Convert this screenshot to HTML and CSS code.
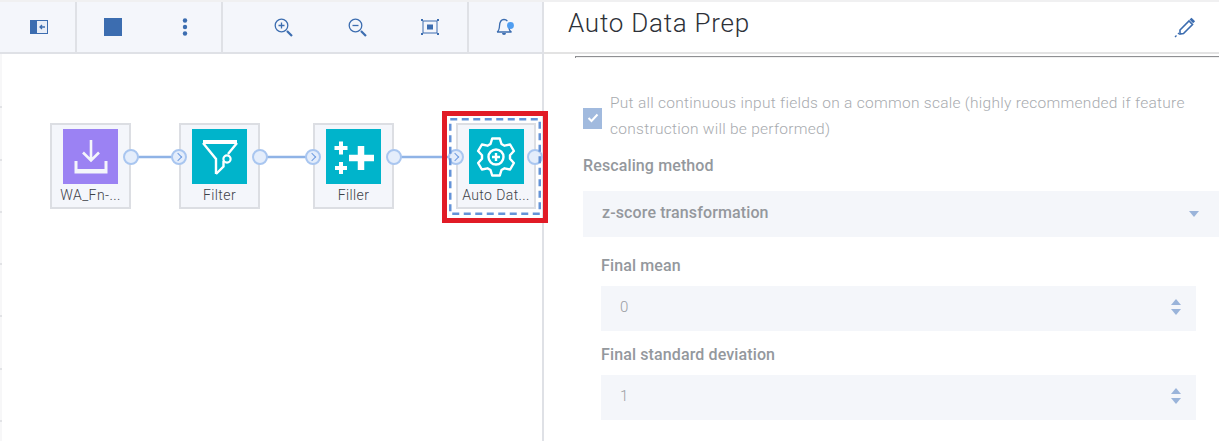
FILE: index.html
```html
<!DOCTYPE html>
<html lang="en">
<head>
<meta charset="utf-8">
<title>Auto Data Prep</title>
<link rel="stylesheet" href="styles.css">
</head>
<body>
<div class="app">
  <section class="flow">
    <div class="toolbar">
      <div class="tool-group g1">
        <svg class="ico" width="18" height="14" viewBox="0 0 18 14"><rect width="18" height="14" fill="#e9eef7"/><path d="M0 0h7v14H0zM0 0h18v1H0zM0 13h18v1H0zM17 0h1v14h-1z" fill="#3c6db0"/><path d="M15 7h-5M12 5 10 7l2 2" fill="none" stroke="#3c6db0" stroke-width="1.3"/></svg>
      </div>
      <div class="tool-group g2">
        <svg class="ico" width="18" height="18" viewBox="0 0 18 18"><rect width="18" height="18" fill="#3c6db0"/></svg>
        <svg class="ico" width="6" height="18" viewBox="0 0 6 18"><circle cx="3" cy="2.5" r="2.2" fill="#3c6db0"/><circle cx="3" cy="9" r="2.2" fill="#3c6db0"/><circle cx="3" cy="15.5" r="2.2" fill="#3c6db0"/></svg>
      </div>
      <div class="tool-group g3">
        <svg class="ico" width="19" height="19" viewBox="0 0 19 19"><circle cx="7.5" cy="7.5" r="6.3" fill="none" stroke="#3c6db0" stroke-width="1.3"/><path d="M7.5 4.5v6M4.5 7.5h6" stroke="#3c6db0" stroke-width="1.3"/><path d="m13 13 5 5" stroke="#3c6db0" stroke-width="2.2"/></svg>
        <svg class="ico" width="19" height="19" viewBox="0 0 19 19"><circle cx="7.5" cy="7.5" r="6.3" fill="none" stroke="#3c6db0" stroke-width="1.3"/><path d="M4.5 7.5h6" stroke="#3c6db0" stroke-width="1.3"/><path d="m13 13 5 5" stroke="#3c6db0" stroke-width="2.2"/></svg>
        <svg class="ico" width="18" height="16" viewBox="0 0 18 16"><rect x="2" y="2" width="14" height="12" fill="none" stroke="#3c6db0"/><rect x="6" y="5.5" width="6" height="5" fill="#3c6db0"/><path d="M0 0h2v2H0zM16 0h2v2h-2zM0 14h2v2H0zM16 14h2v2h-2z" fill="#3c6db0"/></svg>
      </div>
      <div class="tool-group g4">
        <svg class="ico" width="19" height="18" viewBox="0 0 19 18"><path d="M1 14c2-1 2.300-3 2.500-6C3.700 4 5.500 1.500 8 1.500c1.500 0 2.600.6 3.400 1.700M13 10c.2 2 1 3.200 2.500 4H1" fill="none" stroke="#3c6db0" stroke-width="1.3"/><path d="M6 15h4a2 2 0 0 1-4 0z" fill="#3c6db0"/><circle cx="14.500" cy="7.500" r="3.400" fill="#4f9df0"/></svg>
      </div>
    </div>
    <div class="canvas">
      <i class="tick t1"></i><i class="tick t2"></i><i class="tick t3"></i><i class="tick t4"></i><i class="tick t5"></i><i class="tick t6"></i><i class="tick t7"></i>
      <svg class="wires" width="543" height="388" viewBox="0 0 543 388"><path d="M131 103h49M260 103h53M394 103h62" stroke="#8fb3e6" stroke-width="2.400"/></svg>

      <div class="node n1">
        <div class="tile purple"><svg width="34" height="36" viewBox="0 0 34 36"><path d="M17 1v20M9 13.500l8 8 8-8" fill="none" stroke="#f4f6fb" stroke-width="2.600"/><path d="M2 22v11h30V22" fill="none" stroke="#f4f6fb" stroke-width="3"/><path d="M2 32h30" stroke="#f4f6fb" stroke-width="4"/></svg></div>
        <span class="node-name">WA_Fn-...</span>
        <b class="port out"></b>
      </div>
      <div class="node n2">
        <div class="tile"><svg width="38" height="38" viewBox="0 0 38 38"><path d="M15 36V21L2 5M36 5 27 16" fill="none" stroke="#fff" stroke-width="2.400"/><path d="M2 4h34" stroke="#fff" stroke-width="4"/><circle cx="26" cy="21" r="3.600" fill="none" stroke="#fff" stroke-width="2.200"/><path d="M15 36l7.500-7.500V23" fill="none" stroke="#fff" stroke-width="2.400"/></svg></div>
        <span class="node-name">Filter</span>
        <b class="port in"></b><b class="port out"></b>
      </div>
      <div class="node n3">
        <div class="tile"><svg width="55" height="55" viewBox="0 0 55 55"><path d="M15 12.500v13M8.500 19h13M15 33v12M9 39h12" stroke="#fff" stroke-width="4" fill="none"/><path d="M35 17v24M23 29h25" stroke="#fff" stroke-width="6.500" fill="none"/></svg></div>
        <span class="node-name">Filler</span>
        <b class="port in"></b><b class="port out"></b>
      </div>
      <div class="node n4">
        <div class="tile"><svg width="40" height="40" viewBox="-20 -20 40 40"><path d="M-5.500-13-3.800-18.500H3.800L5.500-13 8.500-11.300 14.100-12.500 17.900-6 14-1.700V1.700L17.900 6 14.100 12.500 8.500 11.300 5.500 13 3.800 18.500H-3.800L-5.500 13-8.500 11.300-14.100 12.500-17.900 6-14 1.700V-1.700L-17.900-6-14.100-12.500-8.500-11.300z" fill="none" stroke="#fff" stroke-width="2.400" stroke-linejoin="round"/><circle r="7.500" fill="none" stroke="#fff" stroke-width="2.400"/><path d="M0-4v8M-4 0h8" stroke="#fff" stroke-width="2.400"/></svg></div>
        <span class="node-name">Auto Dat...</span>
        <b class="port in"></b><b class="port out"></b>
      </div>
      <svg class="dashed" width="92" height="97" viewBox="0 0 92 97"><rect x="1.250" y="1.250" width="89.500" height="94.500" fill="none" stroke="#6493d8" stroke-width="2.500" stroke-dasharray="7 4.500"/></svg>
      <div class="highlight"></div>
    </div>
  </section>

  <section class="panel">
    <header class="panel-head">
      <h1>Auto Data Prep</h1>
      <svg width="24" height="24" viewBox="0 0 24 24"><path d="M7 14 16 5l3.500 3.500-9 9-3.500.5z" fill="none" stroke="#3c6db0" stroke-width="1.600"/><path d="M16.500 3.500l2-1.800 3.600 3.600-2 2z" fill="#3c6db0"/><path d="M2 21l1.500-1.500M5 18l1-1" stroke="#3c6db0" stroke-width="1.400"/></svg>
    </header>
    <div class="panel-body">
      <div class="rule"></div>
      <div class="check-row">
        <span class="checkbox"><svg width="12" height="10" viewBox="0 0 12 10"><path d="m1.500 5 3 3 6-6.500" fill="none" stroke="#fff" stroke-width="2"/></svg></span>
        <p>Put all continuous input fields on a common scale (highly recommended if feature construction will be performed)</p>
      </div>
      <div class="label top-label">Rescaling method</div>
      <div class="select">
        <span>z-score transformation</span>
        <i class="caret"></i>
      </div>
      <div class="sub">
        <div class="label">Final mean</div>
        <div class="number">
          <span>0</span>
          <div class="stepper"><i class="up"></i><i class="down"></i></div>
        </div>
        <div class="label second">Final standard deviation</div>
        <div class="number">
          <span>1</span>
          <div class="stepper"><i class="up"></i><i class="down"></i></div>
        </div>
      </div>
    </div>
  </section>
</div>
</body>
</html>
```
FILE: styles.css
```css
* { box-sizing: border-box; }
html, body { margin: 0; height: 100%; background: #fff; overflow: hidden; }
body { font-family: "Roboto", "Noto Sans", sans-serif; }
.app { display: flex; height: 441px; border-top: 2px solid #f0f0f1; }
.flow { position: relative; z-index: 1; width: 544px; flex: none; border-right: 2px solid #dfe1e6; display: flex; flex-direction: column; }
.toolbar { height: 52px; flex: none; display: flex; background: #f4f6fb; border-bottom: 2px solid #dfe1e6; padding-left: 2px; }
.tool-group { display: flex; align-items: center; height: 100%; border-right: 2px solid #dfe1e6; }
.g1 { width: 75px; justify-content: center; }
.g2 { width: 146px; justify-content: space-between; padding: 0 33px 0 27px; }
.g3 { width: 246px; justify-content: space-between; padding: 0 28px 0 51px; }
.g4 { flex: 1; border-right: 0; justify-content: center; }
.ico { display: block; flex: none; }
.canvas { position: relative; flex: 1; background: #fff; }
.canvas::before { content: ""; position: absolute; left: 0; top: 0; bottom: 0; width: 2px; background: #f7f7f8; }
.tick { position: absolute; left: 0; width: 2px; height: 2px; background: #e2e3e6; }
.t1 { top: 52px; } .t2 { top: 105px; } .t3 { top: 157px; } .t4 { top: 209px; } .t5 { top: 261px; } .t6 { top: 314px; } .t7 { top: 366px; }
.wires { position: absolute; left: 0; top: 0; }
.node { position: absolute; top: 69px; width: 81px; height: 86px; background: #f4f6fb; border: 2px solid #dcdee3; display: flex; flex-direction: column; align-items: center; padding-top: 4px; }
.n1 { left: 50px; } .n2 { left: 179px; } .n3 { left: 313px; } .n4 { left: 456px; width: 80px; }
.tile { width: 55px; height: 55px; flex: none; background: #00b4cb; display: flex; align-items: center; justify-content: center; }
.tile.purple { background: #9b82f3; }
.node-name { margin-top: 1px; font-size: 14px; line-height: 20px; font-weight: 300; color: #3d4148; letter-spacing: .4px; white-space: nowrap; }
.port { position: absolute; top: 24px; width: 16px; height: 16px; border-radius: 50%; background: #e4edfb; border: 2px solid #a9c6f0; }
.port.out { right: -10px; }
.n4 .port.out { right: -9px; }
.port.in { left: -10px; }
.port.in::after { content: ""; position: absolute; left: 2px; top: 3px; width: 5px; height: 5px; border-top: 1px solid #6f9ce0; border-right: 1px solid #6f9ce0; transform: rotate(45deg); }
.dashed { position: absolute; left: 449px; top: 64px; display: block; }
.highlight { position: absolute; left: 442px; top: 57px; width: 106px; height: 112px; border: 5px solid #e11b26; }
.panel { flex: 1; min-width: 0; display: flex; flex-direction: column; }
.panel-head { height: 52px; flex: none; display: flex; align-items: center; justify-content: space-between; padding: 0 22px 8px 24px; border-bottom: 2px solid #e3e3e3; }
.panel-head h1 { margin: 0; font-size: 26px; line-height: 36px; font-weight: 300; color: #2d3138; letter-spacing: .75px; }
.panel-head svg { margin-top: 10px; }
.panel-body { padding-left: 39px; }
.rule { height: 2px; margin: 2px 0 0 -8px; border-top: 1px solid #8e8f92; border-left: 1px solid #8e8f92; background: #f0f0f0; }
.check-row { display: flex; align-items: center; margin-top: 32px; height: 52px; }
.checkbox { width: 19px; height: 21px; flex: none; background: #a1bade; margin-top: 4px; display: flex; align-items: center; justify-content: center; }
.check-row p { margin: 0 0 0 8px; font-size: 15.5px; line-height: 26px; font-weight: 300; color: #a8abaf; letter-spacing: .27px; width: 600px; }
.label { font-size: 16px; line-height: 20px; font-weight: 500; color: #94989d; letter-spacing: .12px; }
.top-label { margin-top: 14px; }
.select { height: 46px; margin-top: 15px; background: #f4f6fa; display: flex; align-items: center; justify-content: space-between; padding: 0 19px 3px 19px; font-size: 16px; letter-spacing: .12px; font-weight: 500; color: #94989d; }
.caret { width: 0; height: 0; border-left: 5px solid transparent; border-right: 5px solid transparent; border-top: 6px solid #9ab4da; margin-right: 1px; margin-top: 3px; }
.sub { margin: 19px 0 0 18px; width: 595px; }
.number { height: 45px; margin-top: 10px; background: #f4f6fa; display: flex; align-items: center; justify-content: space-between; padding: 0 15px 3px 19px; font-size: 15px; font-weight: 300; color: #9a9da2; }
.second { margin-top: 14px; }
.stepper { display: flex; flex-direction: column; gap: 4px; }
.stepper i { display: block; width: 0; height: 0; border-left: 5px solid transparent; border-right: 5px solid transparent; }
.stepper .up { border-bottom: 6px solid #9ab4da; }
.stepper .down { border-top: 6px solid #9ab4da; }
```
